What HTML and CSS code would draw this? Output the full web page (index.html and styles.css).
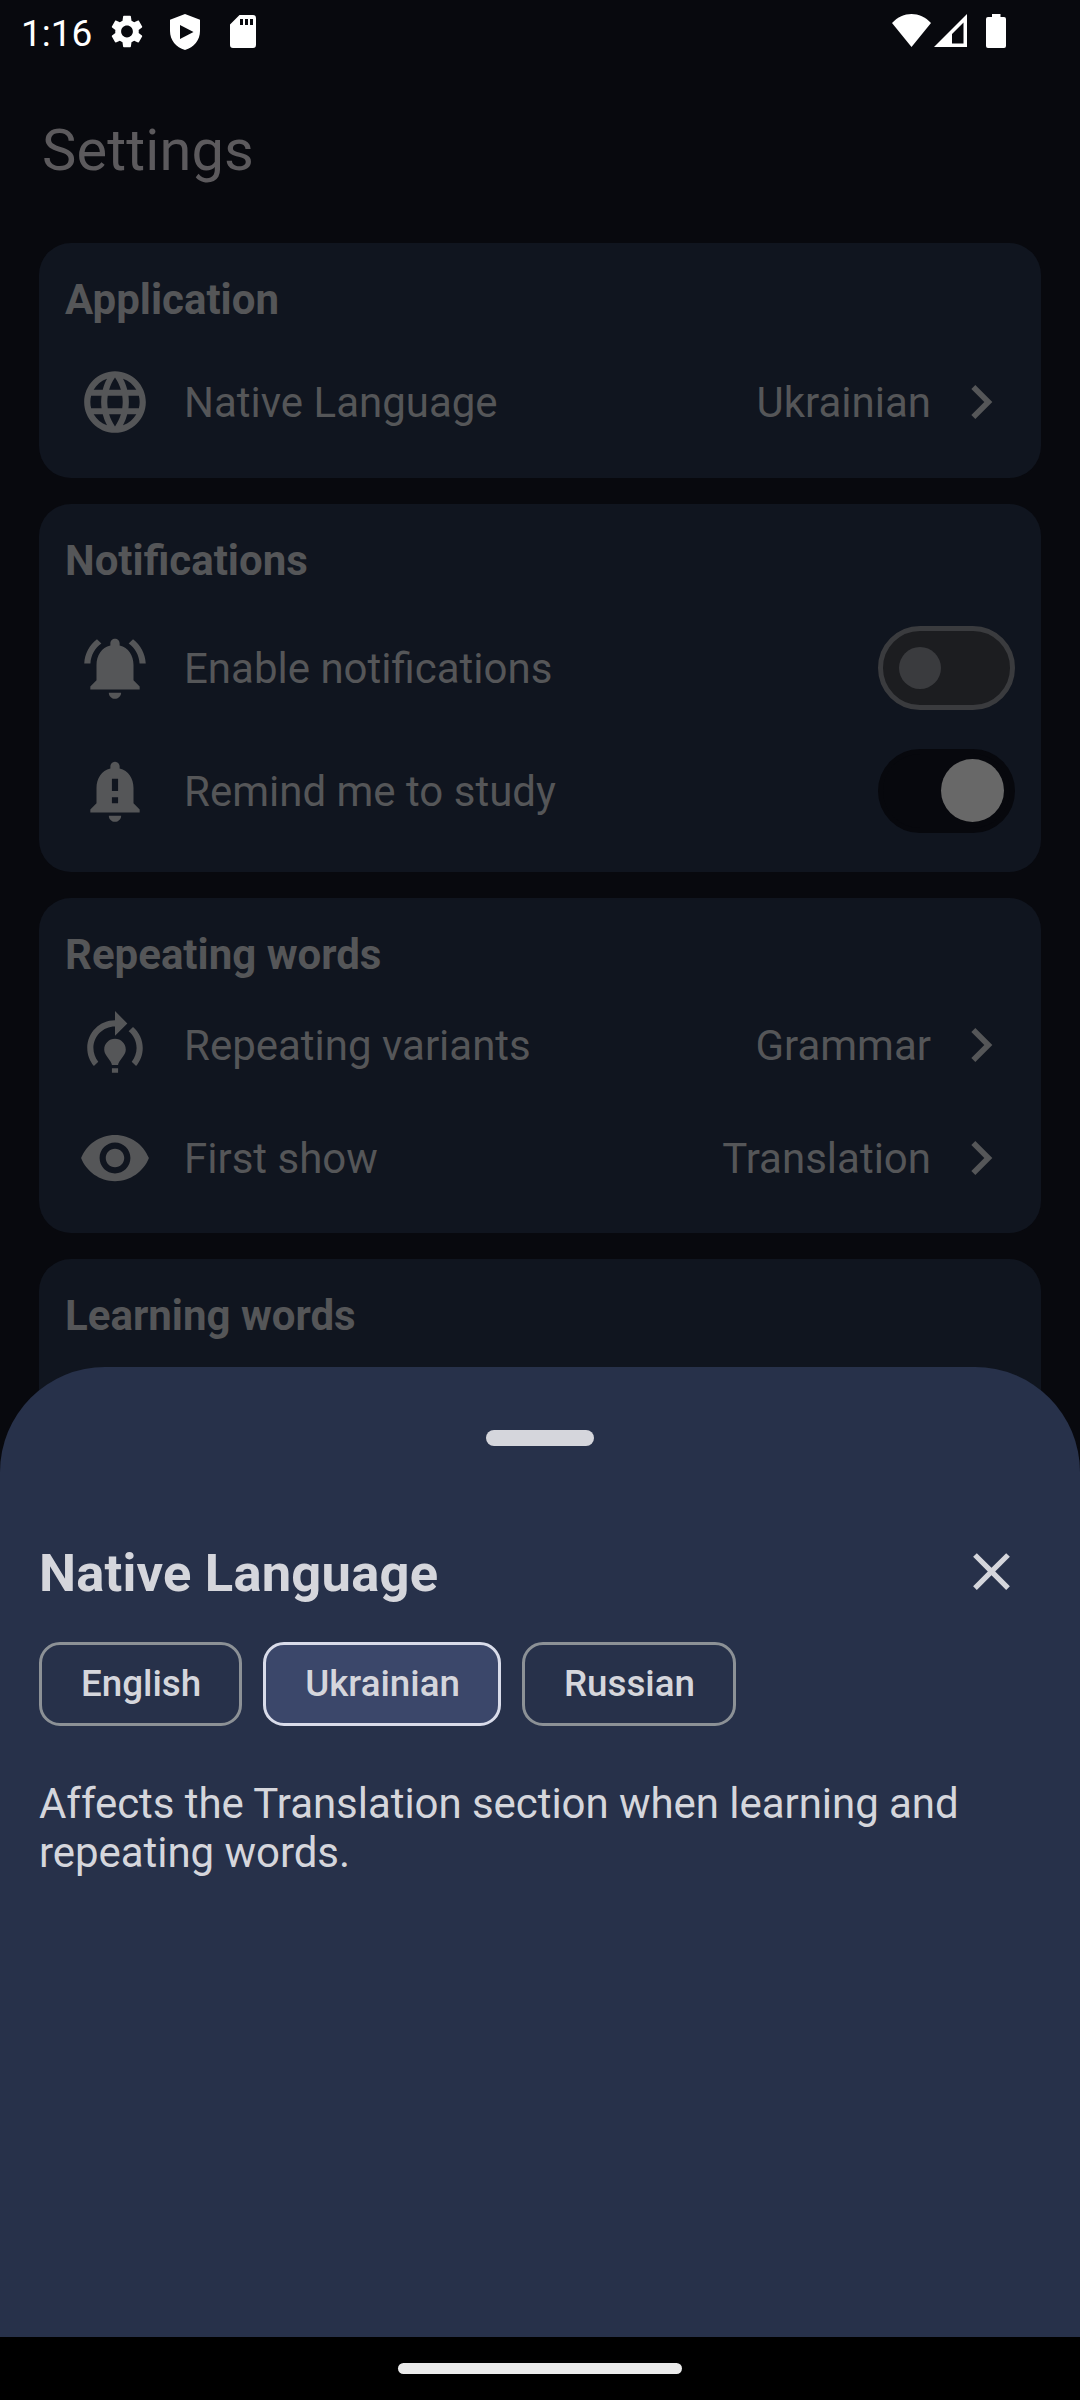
FILE: index.html
```html
<!DOCTYPE html>
<html lang="en">
<head>
<meta charset="utf-8">
<title>Settings</title>
<link rel="stylesheet" href="styles.css">
</head>
<body>
<div class="screen">
  <header class="status">
    <span class="clock">1:16</span>
    <svg class="st-gear" viewBox="2.2 2 19.6 20"><path d="M19.14 12.94c.04-.3.06-.61.06-.94 0-.32-.02-.64-.07-.94l2.03-1.58c.18-.14.23-.41.12-.61l-1.92-3.32c-.12-.22-.37-.29-.59-.22l-2.39.96c-.5-.38-1.03-.7-1.62-.94l-.36-2.54c-.04-.24-.24-.41-.48-.41h-3.84c-.24 0-.43.17-.47.41l-.36 2.54c-.59.24-1.13.57-1.62.94l-2.39-.96c-.22-.08-.47 0-.59.22L2.74 8.87c-.12.21-.08.47.12.61l2.03 1.58c-.05.3-.09.63-.09.94s.02.64.07.94l-2.03 1.58c-.18.14-.23.41-.12.61l1.92 3.32c.12.22.37.29.59.22l2.39-.96c.5.38 1.03.7 1.62.94l.36 2.54c.05.24.24.41.48.41h3.84c.24 0 .44-.17.47-.41l.36-2.54c.59-.24 1.13-.56 1.62-.94l2.39.96c.22.08.47 0 .59-.22l1.92-3.32c.12-.22.07-.47-.12-.61l-2.01-1.58zM12 15.6c-1.98 0-3.6-1.62-3.6-3.6s1.62-3.6 3.6-3.6 3.6 1.62 3.6 3.6-1.62 3.6-3.6 3.6z"/></svg>
    <svg class="st-shield" viewBox="0 0 30 36"><path fill-rule="evenodd" d="M15 0 30 5.8V17C30 26 24 33.500 15 36 6 33.500 0 26 0 17V5.800zM10 11v14l13.500-7z"/></svg>
    <svg class="st-sd" viewBox="0 0 26 33"><path fill-rule="evenodd" d="M9.500 0H23a3 3 0 0 1 3 3V30a3 3 0 0 1-3 3H3a3 3 0 0 1-3-3V9.500zM10 4v6h3V4zM15 4v6h3V4zM20 4v6h3V4z"/></svg>
    <span class="spacer"></span>
    <svg class="st-wifi" viewBox="0 0 39 33"><path d="M0 9C11-3 28-3 39 9L19.500 33z"/></svg>
    <svg class="st-signal" viewBox="0 0 33 33"><path fill-rule="evenodd" d="M33 0V33H0zM29.500 8.500 18 20V29.500H29.500z"/></svg>
    <svg class="st-battery" viewBox="0 0 20 34"><path d="M6 0h8.500v3H18a2 2 0 0 1 2 2V32a2 2 0 0 1-2 2H2a2 2 0 0 1-2-2V5a2 2 0 0 1 2-2h4z"/></svg>
  </header>
  <h1 class="page-title">Settings</h1>
  <main class="cards">
    <section class="card">
      <h2>Application</h2>
      <div class="row">
        <svg class="icon" viewBox="0 0 24 24"><path d="M11.990 2C6.470 2 2 6.480 2 12s4.470 10 9.990 10C17.520 22 22 17.520 22 12S17.520 2 11.990 2zm6.930 6h-2.950c-.32-1.250-.78-2.450-1.380-3.560 1.840.63 3.370 1.910 4.330 3.560zM12 4.040c.83 1.200 1.480 2.530 1.910 3.960h-3.820c.43-1.430 1.080-2.760 1.910-3.960zM4.260 14C4.100 13.360 4 12.690 4 12s.1-1.360.26-2h3.380c-.08.66-.14 1.320-.14 2s.06 1.340.14 2H4.260zm.82 2h2.950c.32 1.250.78 2.450 1.380 3.560-1.840-.63-3.370-1.900-4.330-3.560zm2.950-8H5.080c.96-1.660 2.490-2.930 4.330-3.560C8.810 5.550 8.350 6.750 8.030 8zM12 19.960c-.83-1.200-1.480-2.530-1.910-3.960h3.820c-.43 1.430-1.080 2.760-1.910 3.960zM14.340 14H9.660c-.09-.66-.16-1.320-.16-2s.07-1.350.16-2h4.680c.09.65.16 1.320.16 2s-.07 1.340-.16 2zm.25 5.560c.6-1.110 1.060-2.310 1.380-3.560h2.950c-.96 1.650-2.490 2.930-4.330 3.560zM16.360 14c.08-.66.14-1.320.14-2s-.06-1.340-.14-2h3.380c.16.64.26 1.310.26 2s-.1 1.360-.26 2h-3.380z"/></svg>
        <span class="label">Native Language</span>
        <span class="value">Ukrainian</span>
        <svg class="chevron" viewBox="0 0 24 24"><path d="M8.590 16.590L13.170 12 8.590 7.410 10 6l6 6-6 6z"/></svg>
      </div>
    </section>
    <section class="card card-toggles">
      <h2>Notifications</h2>
      <div class="row">
        <svg class="icon" viewBox="0 0 24 24"><path d="M7.580 4.080L6.150 2.650C3.750 4.480 2.170 7.300 2.030 10.500h2c.15-2.650 1.510-4.970 3.550-6.420zm12.390 6.420h2c-.15-3.200-1.730-6.020-4.120-7.850l-1.420 1.430c2.020 1.450 3.390 3.770 3.540 6.420zM18 11c0-3.070-1.640-5.640-4.500-6.320V4c0-.83-.67-1.500-1.500-1.500s-1.500.67-1.500 1.500v.68C7.630 5.360 6 7.920 6 11v5l-2 2v1h16v-1l-2-2v-5zm-6 11c.14 0 .27-.01.4-.04.65-.14 1.180-.58 1.440-1.180.1-.24.15-.5.150-.78h-4c.01 1.100.9 2 2.010 2z"/></svg>
        <span class="label">Enable notifications</span>
        <span class="toggle"><span class="thumb"></span></span>
      </div>
      <div class="row">
        <svg class="icon" viewBox="0 0 24 24"><path d="M18 16v-5c0-3.070-1.640-5.640-4.500-6.320V4c0-.83-.67-1.500-1.500-1.500s-1.500.67-1.500 1.500v.68C7.630 5.360 6 7.920 6 11v5l-2 2v1h16v-1l-2-2zm-5 0h-2v-2h2v2zm0-4h-2V8h2v4zm-1 10c1.100 0 2-.9 2-2h-4c0 1.100.89 2 2 2z"/></svg>
        <span class="label">Remind me to study</span>
        <span class="toggle on"><span class="thumb"></span></span>
      </div>
    </section>
    <section class="card card-repeat">
      <h2>Repeating words</h2>
      <div class="row">
        <svg class="icon" viewBox="0 0 24 24"><path d="M15.500 13.500c0 2-2.500 3.500-2.500 5h-2c0-1.500-2.500-3-2.500-5 0-1.930 1.570-3.500 3.500-3.500s3.500 1.570 3.500 3.500zm-2.500 6h-2V21h2v-1.500zm6-6.500c0 1.680-.59 3.210-1.580 4.420l1.420 1.420C20.180 17.270 21 15.230 21 13c0-2.740-1.230-5.190-3.160-6.840l-1.420 1.420C17.990 8.860 19 10.820 19 13zm-3-8l-4-4v3c-4.970 0-9 4.030-9 9 0 2.230.82 4.270 2.160 5.840l1.420-1.420C5.590 16.210 5 14.680 5 13c0-3.860 3.140-7 7-7v3l4-4z"/></svg>
        <span class="label">Repeating variants</span>
        <span class="value">Grammar</span>
        <svg class="chevron" viewBox="0 0 24 24"><path d="M8.590 16.590L13.170 12 8.590 7.410 10 6l6 6-6 6z"/></svg>
      </div>
      <div class="row">
        <svg class="icon" viewBox="0 0 24 24"><path d="M12 4.500C7 4.500 2.730 7.610 1 12c1.730 4.390 6 7.500 11 7.500s9.270-3.110 11-7.500c-1.730-4.390-6-7.500-11-7.500zM12 17c-2.760 0-5-2.240-5-5s2.240-5 5-5 5 2.240 5 5-2.240 5-5 5zm0-8c-1.660 0-3 1.340-3 3s1.340 3 3 3 3-1.340 3-3-1.340-3-3-3z"/></svg>
        <span class="label">First show</span>
        <span class="value">Translation</span>
        <svg class="chevron" viewBox="0 0 24 24"><path d="M8.590 16.590L13.170 12 8.590 7.410 10 6l6 6-6 6z"/></svg>
      </div>
    </section>
    <section class="card">
      <h2>Learning words</h2>
    </section>
  </main>

  <div class="sheet">
    <div class="handle"></div>
    <div class="sheet-head">
      <h3>Native Language</h3>
      <svg class="close" viewBox="0 0 24 24"><path d="M19 6.410L17.590 5 12 10.590 6.410 5 5 6.410 10.590 12 5 17.590 6.410 19 12 13.410 17.590 19 19 17.590 13.410 12z"/></svg>
    </div>
    <div class="chips">
      <span class="chip">English</span>
      <span class="chip selected">Ukrainian</span>
      <span class="chip">Russian</span>
    </div>
    <p class="note">Affects the Translation section when learning and repeating words.</p>
  </div>
  <div class="navbar"><div class="pill"></div></div>
</div>
</body>
</html>
```
FILE: styles.css
```css
* { box-sizing: border-box; }
body { margin: 0; font-family: Roboto, sans-serif; background: #08090e; }
h1, h2, h3, p { margin: 0; }
svg { display: block; flex: none; fill: currentColor; }

.screen {
  position: relative;
  width: 1080px;
  height: 2400px;
  overflow: hidden;
  background: #08090e;
  color: #555658;
}

.status {
  display: flex;
  align-items: flex-start;
  height: 63px;
  padding: 14px 74px 0 21px;
  color: #fff;
}
.clock { width: 90px; margin-top: -2px; font-size: 37px; line-height: 44px; }
.spacer { flex: 1; }
.st-gear { width: 32px; height: 33px; margin-top: 1px; }
.st-shield { width: 30px; height: 36px; margin-left: 27px; }
.st-sd { width: 26px; height: 33px; margin: 1px 0 0 30px; }
.st-wifi { width: 39px; height: 33px; }
.st-signal { width: 33px; height: 33px; margin-left: 3px; }
.st-battery { width: 20px; height: 34px; margin-left: 19px; }

.page-title {
  height: 180px;
  padding: 53px 42px 0;
  font-size: 57.75px;
  font-weight: 400;
  line-height: 68px;
  letter-spacing: 0.15px;
  color: #5c5a5d;
}

.cards { display: flex; flex-direction: column; gap: 26px; padding: 0 39px; }
.card {
  height: 235px;
  padding: 32px 26px 0;
  border-radius: 32px;
  background: #10151f;
}
.card-toggles { height: 368px; }
.card-repeat { height: 335px; }
.card h2 { font-size: 42px; font-weight: 700; line-height: 50px; }
.row {
  display: flex;
  align-items: center;
  height: 113px;
  padding-left: 13px;
  font-size: 42px;
  line-height: 50px;
}
.card h2 + .row { margin-top: 20px; }
.card-toggles .row { height: 123px; }
.card-repeat h2 + .row { margin-top: 8px; }
.icon { width: 74px; height: 74px; margin-right: 32px; }
.label { flex: 1; padding-top: 3px; }
.value { margin-right: 16px; padding-top: 3px; }
.chevron { width: 68px; height: 68px; }

.toggle {
  display: flex;
  align-items: center;
  width: 137px;
  height: 84px;
  padding-left: 16px;
  border: 5px solid #3a3b3e;
  border-radius: 42px;
  background: #1c1d20;
}
.thumb { width: 42px; height: 42px; border-radius: 50%; background: #3a3b3e; }
.toggle.on { padding-left: 58px; border-color: #07080d; background: #07080d; }
.toggle.on .thumb { width: 63px; height: 63px; background: #686868; }

.sheet {
  position: absolute;
  left: 0;
  right: 0;
  top: 1367px;
  height: 970px;
  padding: 63px 39px 0;
  border-radius: 105px 105px 0 0;
  background: #27314a;
  color: #d5d6dc;
}
.handle { width: 108px; height: 16px; margin: 0 auto; border-radius: 8px; background: #d5d6dc; }
.sheet-head {
  display: flex;
  align-items: center;
  justify-content: space-between;
  height: 126px;
  margin-top: 62px;
  padding-right: 18px;
}
.sheet-head h3 { padding-top: 3px; font-size: 52.5px; font-weight: 700; line-height: 62px; letter-spacing: 0.2px; }
.close { width: 63px; height: 63px; }
.chips { display: flex; gap: 21px; margin-top: 8px; }
.chip {
  height: 84px;
  padding: 0 38px 0 39px;
  border: 3px solid #8c9196;
  border-radius: 21px;
  font-size: 36.75px;
  font-weight: 500;
  line-height: 78px;
}
.chip.selected { border-color: #d9dcea; background: #3b476a; }
.note { margin-top: 53px; font-size: 42px; line-height: 49px; letter-spacing: -0.05px; }

.navbar {
  position: absolute;
  left: 0;
  right: 0;
  bottom: 0;
  height: 63px;
  padding-top: 26px;
  background: #000;
}
.pill { width: 284px; height: 11px; margin: 0 auto; border-radius: 6px; background: #ebebeb; }
```
